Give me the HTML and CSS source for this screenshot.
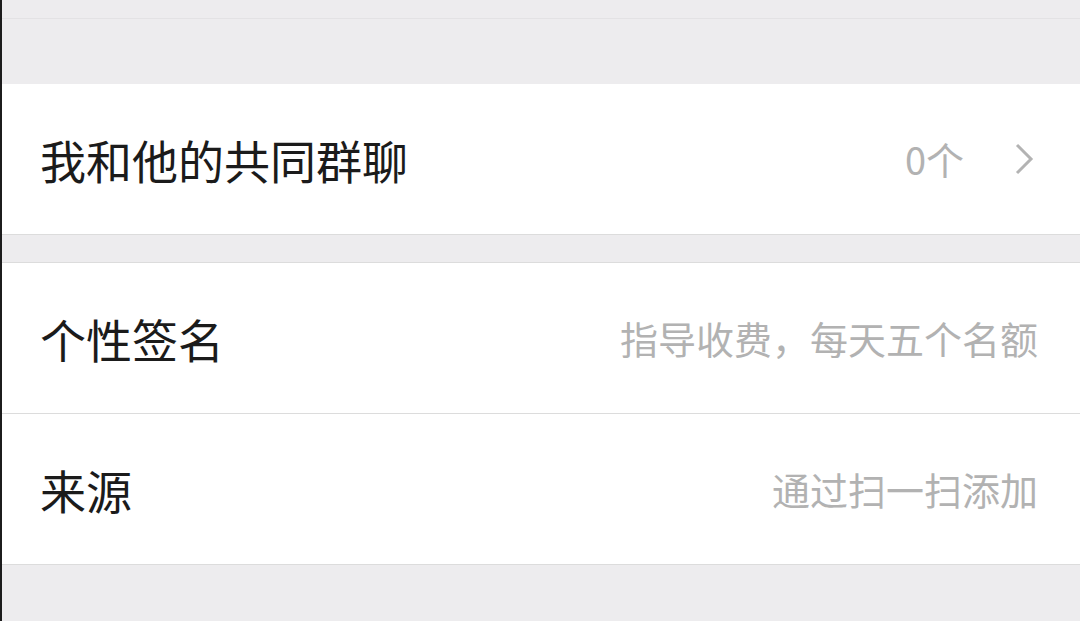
FILE: index.html
```html
<!doctype html>
<html lang="zh-CN">
    <head>
        <meta charset="UTF-8" />
        <meta name="viewport" content="width=device-width, initial-scale=1.0" />
        <title>详细资料</title>
        <link rel="stylesheet" href="styles.css">
    </head>
    <body>
        <div class="page">
            <div class="top-strip"></div>
            <div class="gap gap-large"></div>
            <div class="group">
                <div class="cell">
                    <span class="label">我和他的共同群聊</span>
                    <span class="value value-count">0个</span>
                    <svg class="chevron" width="20" height="32" viewBox="0 0 20 32">
                        <polyline points="3,2 17,16 3,30" fill="none" stroke="#b3b3b3" stroke-width="3" />
                    </svg>
                </div>
            </div>
            <div class="gap gap-small"></div>
            <div class="group">
                <div class="cell">
                    <span class="label">个性签名</span>
                    <span class="value">指导收费，每天五个名额</span>
                </div>
                <div class="cell">
                    <span class="label">来源</span>
                    <span class="value">通过扫一扫添加</span>
                </div>
            </div>
            <div class="gap gap-rest"></div>
        </div>
    </body>
</html>
```

FILE: styles.css
```css
:root {
    --bg-gray: #edecee;
    --line: #dcdcdc;
    --text-main: #1b1b1b;
    --text-sub: #b2b2b2;
}
html, body {
    margin: 0;
    padding: 0;
    height: 100%;
    background: var(--bg-gray);
}
body {
    font-family: "Noto Sans CJK SC", "Noto Sans", sans-serif;
    overflow: hidden;
}
.page {
    border-left: 2px solid #1c1c1c;
    height: 100%;
    display: flex;
    flex-direction: column;
}
.top-strip {
    height: 18px;
    border-bottom: 1px solid #e3e2e4;
}
.gap-large {
    height: 65px;
}
.gap-small {
    height: 27px;
    border-bottom: 1px solid var(--line);
}
.gap-rest {
    flex: 1;
}
.group {
    background: #fff;
    border-bottom: 1px solid var(--line);
}
.cell {
    height: 150px;
    display: flex;
    align-items: center;
    padding: 0 42px 0 38px;
}
.cell + .cell {
    border-top: 1px solid var(--line);
}
.label {
    flex: 1;
    font-size: 46px;
    color: var(--text-main);
    line-height: 1;
}
.value {
    font-size: 38px;
    color: var(--text-sub);
    line-height: 1;
}
.value-count {
    margin-right: 50px;
}
.chevron {
    display: block;
    margin-right: 4px;
}
```
